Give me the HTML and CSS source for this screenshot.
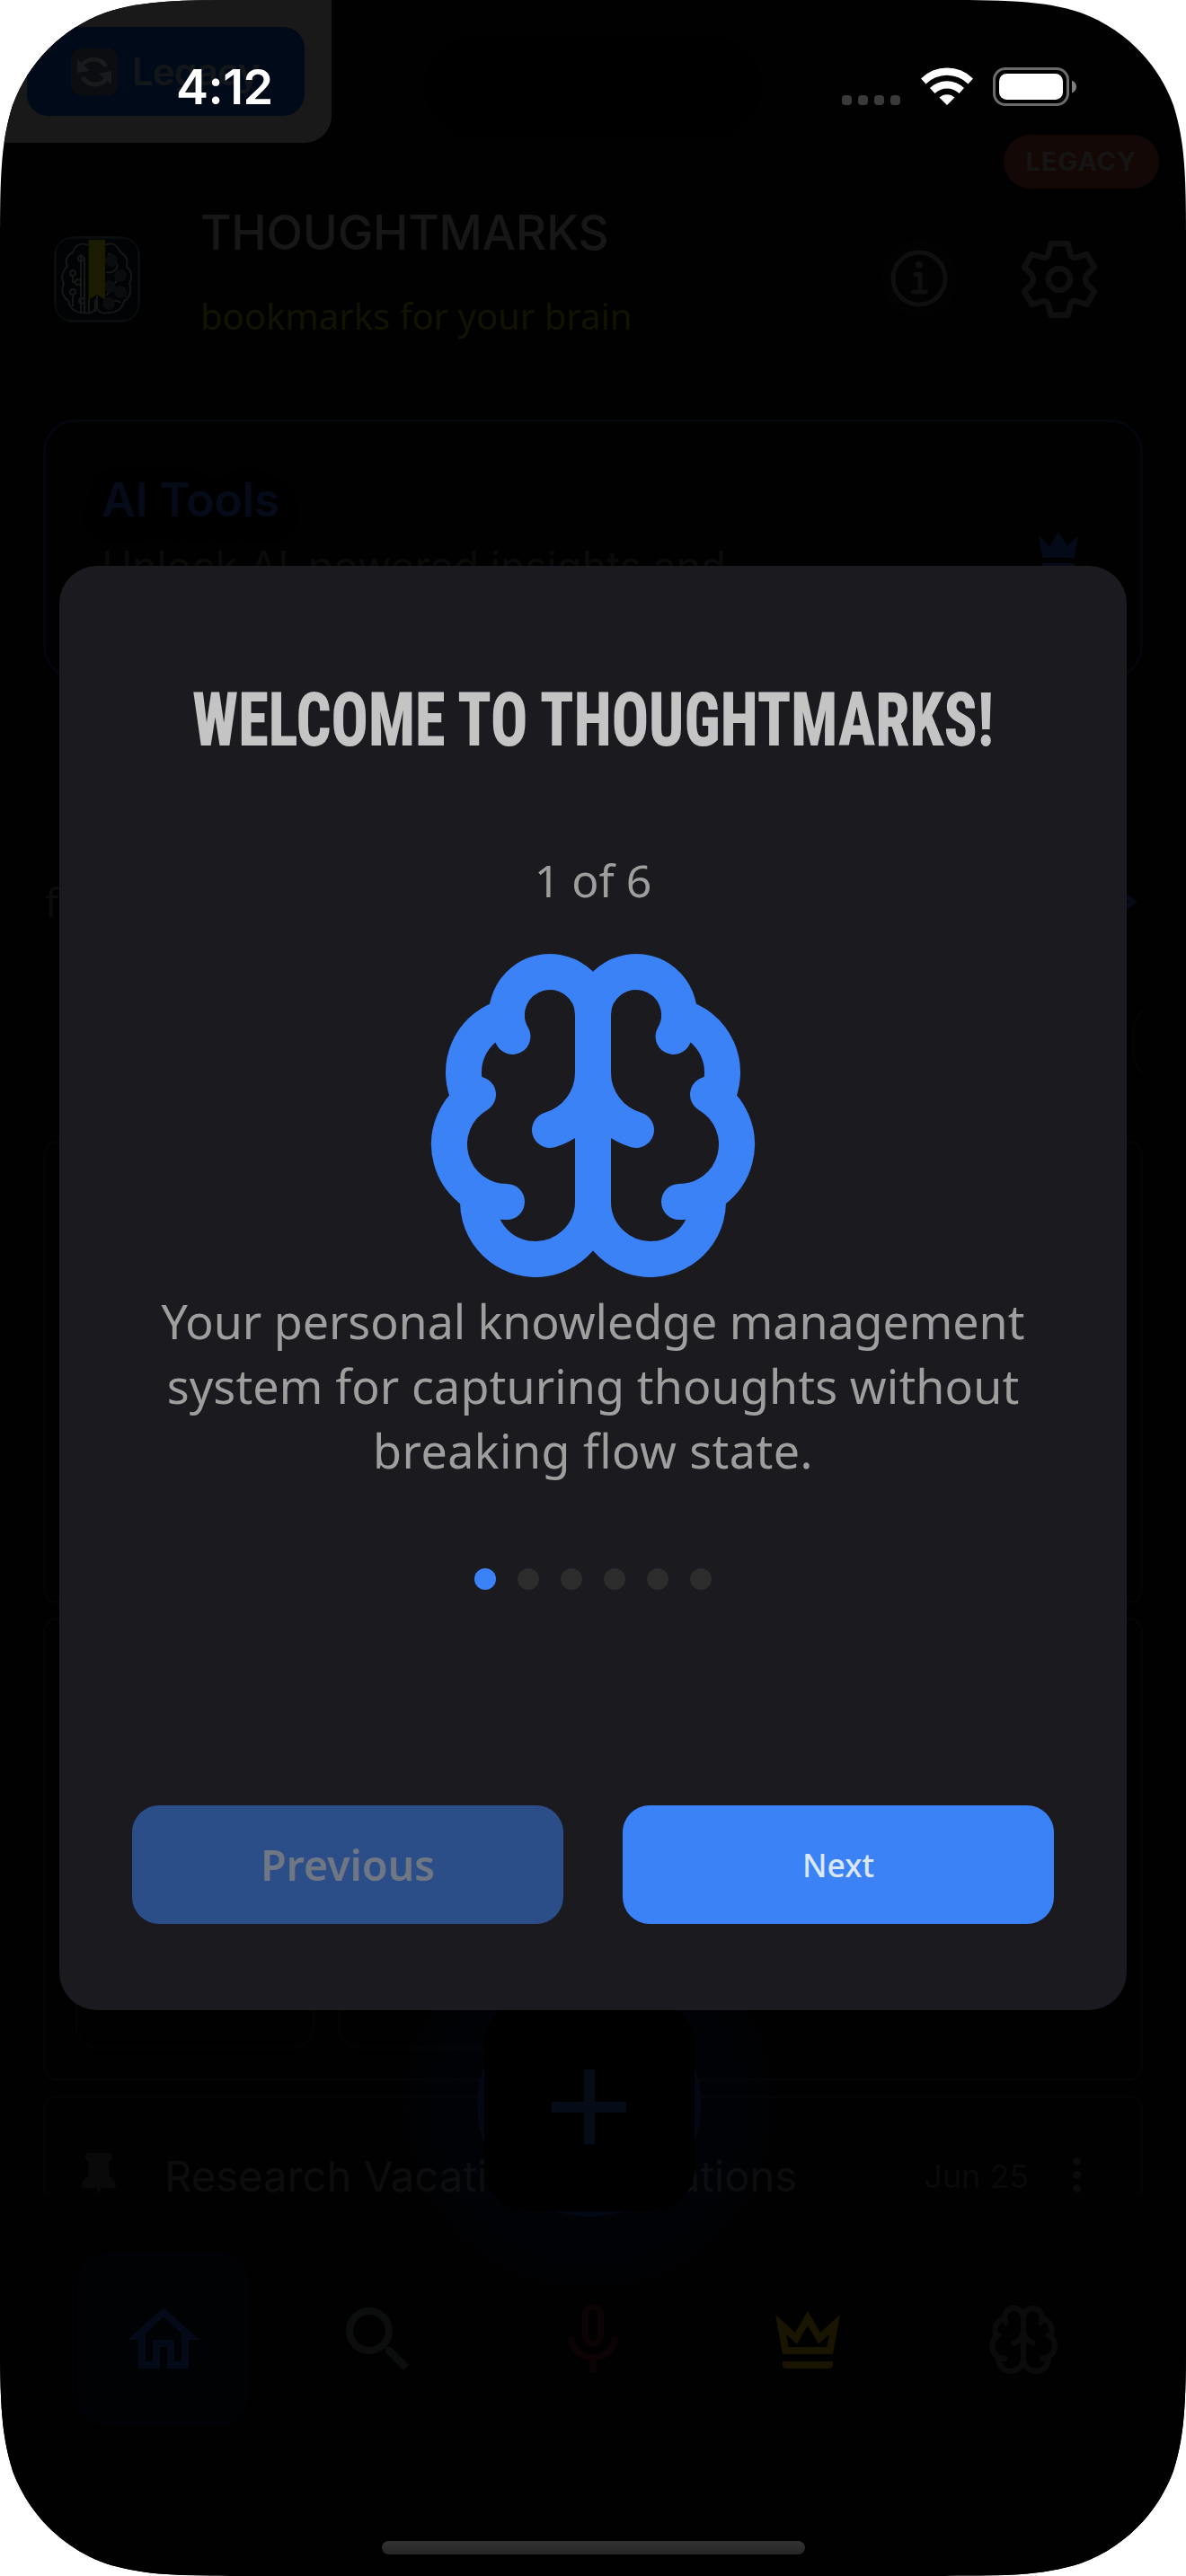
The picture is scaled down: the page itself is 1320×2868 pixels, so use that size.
FILE: index.html
```html
<!DOCTYPE html>
<html lang="en">
<head>
<meta charset="utf-8">
<title>Thoughtmarks</title>
<link rel="stylesheet" href="styles.css">
</head>
<body>
<svg class="defs" aria-hidden="true">
  <symbol id="brain" viewBox="0 0 24 24">
    <g fill="none" stroke="currentColor" stroke-linecap="round" stroke-linejoin="round">
      <path d="M12 18V5"/>
      <path d="M15 13a4.17 4.17 0 0 1-3-4 4.17 4.17 0 0 1-3 4"/>
      <path d="M17.598 6.5A3 3 0 1 0 12 5a3 3 0 1 0-5.598 1.5"/>
      <path d="M17.997 5.125a4 4 0 0 1 2.526 5.77"/>
      <path d="M18 18a4 4 0 0 0 2-7.464"/>
      <path d="M19.967 17.483A4 4 0 1 1 12 18a4 4 0 1 1-7.967-.517"/>
      <path d="M6 18a4 4 0 0 1-2-7.464"/>
      <path d="M6.003 5.125a4 4 0 0 0-2.526 5.77"/>
    </g>
  </symbol>
</svg>
<div class="phone">
  <div class="screen">
    <header class="header">
      <svg class="logo" viewBox="0 0 96 96">
        <rect width="96" height="96" rx="22" fill="#0a0d0d"/>
        <rect x="3" y="3" width="90" height="90" rx="16" fill="#010304"/>
        <g fill="none" stroke="#161818" stroke-width="2">
          <path d="M38 10c-8-4-15 1-17 8-7 3-9 10-6 16-7 6-7 14-4 19-4 8 0 16 5 19 2 9 9 14 18 13 6 2 12-1 12-6"/>
          <path d="M57 10c8-5 14 1 17 8 7 3 9 10 7 16 7 6 6 14 3 19 3 8 0 16-6 19-2 9-9 14-18 13-6 2-12-1-12-6V66"/>
          <path d="M30 86V28M34 86V24M39 86V70M21 78V65M21 44v7h4M30 20v20M46 84V70"/>
          <circle cx="30" cy="25" r="3"/><circle cx="21" cy="41" r="3"/><circle cx="27" cy="51" r="3"/><circle cx="21" cy="62" r="3"/><circle cx="31" cy="72" r="3"/>
          <path d="M60 20c8 0 12 8 4 14M58 40c8 2 14-4 12-10M60 54c10 2 10-10 20-8M58 66c6-8 18-8 22 2M60 78c2-6 10-8 14-4"/>
        </g>
        <g fill="#0b0c0d"><circle cx="64" cy="27" r="7"/><circle cx="74" cy="44" r="7"/><circle cx="62" cy="56" r="7"/><circle cx="74" cy="62" r="7"/><circle cx="61" cy="75" r="7"/></g>
        <path d="M38.500 4H57V71l-9-6-9.500 6Z" fill="#1a1b00"/>
      </svg>
      <div class="brand">
        <h1 class="brand-name">THOUGHTMARKS</h1>
        <p class="brand-tag">bookmarks for your brain</p>
      </div>
      <svg class="info" viewBox="-44 -44 88 88">
        <circle r="43" fill="#020202"/>
        <g fill="none" stroke="#0f0f0f" stroke-width="5" stroke-linecap="round" stroke-linejoin="round"><circle r="29"/><path d="M-4 -4.500H1V15M-6.500 15H7.500"/></g>
        <circle cy="-15" r="4" fill="#0f0f0f"/>
      </svg>
      <svg class="gear" viewBox="-48 -48 96 96" fill="none" stroke="#0f0f0f" stroke-width="6.500" stroke-linejoin="round">
        <path d="M-9.500-39.800H9.500L12.500-27Q14-24 18-24L30.500-28 39-13.500 30.500-5Q29-2 29 0T30.500 5L39 13.500 30.500 28 18 24Q14 24 12.500 27L9.500 39.800H-9.500L-12.500 27Q-14 24-18 24L-30.500 28-39 13.500-30.500 5Q-29 2-29 0T-30.500-5L-39-13.500-30.500-28-18-24Q-14-24-12.500-27Z"/>
        <circle r="12"/>
      </svg>
    </header>

    <section class="ai-card">
      <div class="ai-text">
        <h2 class="ai-title">AI Tools</h2>
        <p class="ai-sub">Unlock AI-powered insights and</p>
      </div>
      <svg class="ai-crown" viewBox="0 0 44 52"><path d="M0 4 12 16 22 0 32 16 44 4 40 29H4ZM4 35H40V42H4Z" fill="#040a17"/></svg>
    </section>

    <div class="filter-row">
      <span class="filter-label">f</span>
      <svg class="filter-arrow" viewBox="0 0 26 26"><path d="M8 0 26 13 8 26V16L18 13 8 10Z" fill="#040a17"/></svg>
    </div>
    <div class="chip-row"><div class="chip"></div></div>
    <div class="card card-a"></div>
    <div class="card card-b"><div class="tile"></div><div class="tile"></div></div>
    <div class="card card-c">
      <svg class="pin" viewBox="0 0 40 46" fill="#090909"><path d="M6 0H34Q36 4 33 9H31L32 26Q39 29 39 39H1Q1 29 8 26L9 9H7Q3 5 6 0ZM17 39H23L20 46Z"/></svg>
      <span class="note-title">Research Vacation Destinations</span>
      <span class="note-date">Jun 25</span>
      <span class="note-more"><i></i><i></i><i></i></span>
    </div>

    <nav class="tabs">
      <div class="tab tab-active"><svg viewBox="0 0 24 24"><path fill="#040a17" d="M12 5.690 17 10.190V18H15V12H9V18H7V10.190L12 5.690M12 3 2 12H5V20H11V14H13V20H19V12H22"/></svg></div>
      <div class="tab"><svg viewBox="0 0 24 24"><path fill="#0c0d0d" d="M15.500 14h-.79l-.28-.27A6.471 6.471 0 0 0 16 9.500 6.500 6.500 0 1 0 9.500 16c1.610 0 3.090-.59 4.230-1.570l.27.28v.79l5 4.990L20.490 19l-4.990-5zm-6 0C7.010 14 5 11.990 5 9.500S7.010 5 9.500 5 14 7.010 14 9.500 11.990 14 9.500 14z"/></svg></div>
      <div class="tab"><svg viewBox="0 0 24 24" fill="none" stroke="#0b0304" stroke-width="1.800"><rect x="9.900" y="2.900" width="4.200" height="10.200" rx="2.100"/><path d="M5.900 11.200a6.100 5.800 0 0 0 12.200 0M12 17V21.200" stroke-width="1.900"/></svg></div>
      <div class="tab"><svg viewBox="0 0 24 24"><path fill="#1a1500" d="M12 8 15 13.200 18 10.500 17.300 14H6.700L6 10.500 9 13.200 12 8M12 4 8.500 10 3 5 5 16H19L21 5 15.500 10 12 4M19 18H5V19C5 19.600 5.400 20 6 20H18C18.600 20 19 19.600 19 19V18Z"/></svg></div>
      <div class="tab"><svg class="tab-brain"><use href="#brain"/></svg></div>
    </nav>
    <div class="fab">
      <div class="fab-glow"></div>
      <div class="fab-ring"></div>
      <div class="fab-body"><svg viewBox="0 0 84 84"><path d="M42 0V83M0 42H83" stroke="#050b17" stroke-width="12"/></svg></div>
    </div>
  </div>

  <div class="island"></div>
  <div class="toggle">
    <div class="toggle-button">
      <svg viewBox="0 0 52 52"><rect width="52" height="52" rx="10" fill="#0b0d10"/><g fill="none" stroke="#191b1d" stroke-width="5"><path d="M11 23C13 11 31 7 39 20"/><path d="M41 29C39 41 21 45 13 32"/></g><path d="M7 12V27L21 25ZM45 40V25L31 28Z" fill="#191b1d"/></svg>
      <span>Legacy</span>
    </div>
  </div>
  <div class="legacy-badge">LEGACY</div>

  <div class="dialog">
    <h2 class="dialog-title"><svg width="892" height="100"><text x="0" y="79.500" textLength="892" lengthAdjust="spacingAndGlyphs">WELCOME TO THOUGHTMARKS!</text></svg></h2>
    <p class="step">1 of 6</p>
    <svg class="dialog-brain"><use href="#brain"/></svg>
    <p class="desc"><span class="l1">Your personal knowledge management</span><span class="l2">system for capturing thoughts without</span><span class="l3">breaking flow state.</span></p>
    <div class="dots"><i class="on"></i><i></i><i></i><i></i><i></i><i></i></div>
    <div class="actions">
      <button class="btn btn-prev">Previous</button>
      <button class="btn btn-next">Next</button>
    </div>
  </div>

  <div class="status">
    <span class="time">4:12</span>
    <div class="signal"><i></i><i></i><i></i><i></i></div>
    <svg class="wifi" viewBox="0 0 58 42" fill="#fff"><path d="M0 12.500A41 41 0 0 1 58 12.500L52.500 18.500A33.500 33.500 0 0 0 5.500 18.500ZM10 23A27 27 0 0 1 48 23L42.500 29A19.500 19.500 0 0 0 15.500 29ZM20.500 33.500A12.500 12.500 0 0 1 37.500 33.500L29 42Z"/></svg>
    <svg class="battery" viewBox="0 0 94 43"><rect x="1.500" y="1.500" width="82" height="40" rx="12.500" fill="none" stroke="#6b6b6b" stroke-width="3"/><rect x="7" y="7" width="71" height="29" rx="8.500" fill="#fff"/><path d="M88 14.500Q93 17 93 21.500T88 28.500Z" fill="#808080"/></svg>
  </div>
  <div class="home-bar"></div>
</div>
</body>
</html>
```
FILE: styles.css
```css
* { box-sizing: border-box; }
body { margin: 0; background: #fff; font-family: Inter, "Liberation Sans", sans-serif; }
h1, h2, p { margin: 0; font-weight: 400; }
svg { display: block; flex: none; }
.defs { position: absolute; width: 0; height: 0; }

.phone {
  position: relative;
  width: 1320px;
  height: 2868px;
  overflow: hidden;
  background: #010101;
  clip-path: path("M284.300 0H1035.700C1117.500 0 1158.500 0 1202.500 13.900C1250.700 31.400 1288.600 69.300 1306.100 117.500C1320 161.500 1320 202.500 1320 284.300V2583.700C1320 2665.500 1320 2706.500 1306.100 2750.500C1288.600 2798.700 1250.700 2836.600 1202.500 2854.100C1158.500 2868 1117.500 2868 1035.700 2868H284.300C202.500 2868 161.500 2868 117.500 2854.100C69.300 2836.600 31.400 2798.700 13.900 2750.500C0 2706.500 0 2665.500 0 2583.700V284.300C0 202.500 0 161.500 13.900 117.500C31.400 69.300 69.300 31.400 117.500 13.900C161.500 0 202.500 0 284.300 0Z");
}

/* Home screen under the overlay */
.screen { position: relative; height: 100%; padding: 215px 48px 0; display: flex; flex-direction: column; }
.header { height: 252px; flex: none; display: flex; align-items: flex-start; padding-left: 12px; }
.logo { width: 96px; height: 96px; margin: 48px 67px 0 0; }
.brand { width: 756px; }
.brand-name { margin-top: 12px; font-size: 53px; line-height: 64px; font-weight: 500; letter-spacing: -0.300px; color: #171717; white-space: nowrap; }
.brand-tag { margin-top: 33px; font-family: "Noto Sans", sans-serif; font-size: 40px; line-height: 56px; color: #121300; white-space: nowrap; }
.info { width: 88px; height: 88px; margin-top: 51px; }
.gear { width: 96px; height: 96px; margin: 48px 0 0 64px; }

.ai-card { height: 289px; flex: none; display: flex; justify-content: space-between; padding: 0 69px 0 62px; border: 3px solid #04060d; border-radius: 36px; }
.ai-title { margin-top: 55px; font-size: 52px; line-height: 64px; font-weight: 600; letter-spacing: -0.400px; color: #050b18; text-shadow: 0 6px 20px #010302; }
.ai-sub { margin-top: 13px; font-size: 46px; line-height: 56px; color: #0a0b0b; white-space: nowrap; }
.ai-crown { width: 44px; height: 52px; margin-top: 122px; }

.filter-row { height: 50px; margin-top: 223px; flex: none; display: flex; justify-content: space-between; align-items: center; padding: 0 6px 0 2px; }
.filter-label { font-family: "Noto Sans", sans-serif; font-size: 44px; line-height: 50px; color: #0c0c0c; }
.filter-arrow { width: 26px; height: 26px; }
.chip-row { height: 84px; margin-top: 89px; flex: none; display: flex; justify-content: flex-end; overflow: hidden; }
.chip { width: 200px; flex: none; margin-right: -188px; border: 3px solid #040404; border-radius: 30px; }
.card { flex: none; border: 3px solid #040404; border-radius: 15px; }
.card-a { height: 516px; margin-top: 68px; }
.card-b { height: 516px; margin-top: 15px; padding: 33px; display: flex; gap: 26px; }
.tile { width: 266px; border: 2px solid #040404; border-radius: 24px; }
.card-c { height: 108px; margin-top: 16px; display: flex; align-items: flex-start; border-bottom: 0; border-bottom-left-radius: 0; border-bottom-right-radius: 0; padding: 61px 66px 0 39px; }
.pin { width: 40px; height: 46px; }
.note-title { margin-left: 53px; margin-top: -2px; width: 846px; font-size: 47.200px; line-height: 56px; color: #0d0d0d; white-space: nowrap; height: 44px; }
.note-date { margin-top: 5px; width: 166px; font-size: 36px; line-height: 42px; color: #0a0a0a; white-space: nowrap; }
.note-more { display: flex; flex-direction: column; gap: 6px; margin-top: 5px; }
.note-more i { width: 9px; height: 9px; border-radius: 50%; background: #0b0b0b; }

.tabs { height: 426px; flex: none; margin: 0 -48px; padding: 66px 87px 0; border-top: 3px solid #020202; background: #010101; display: flex; justify-content: space-between; }
.tab { width: 189px; height: 190px; display: flex; align-items: center; justify-content: center; }
.tab svg { width: 96px; height: 96px; }
.tab .tab-brain { width: 84px; height: 84px; color: #0b0b0b; stroke-width: 1.800; }
.tab-active { background: #010203; border: 2px solid #020308; border-radius: 30px; }

.fab { position: absolute; left: 451px; top: 2139px; width: 410px; height: 410px; }
.fab-glow { position: absolute; inset: 0; border-radius: 50%; background: radial-gradient(circle closest-side, rgba(10, 40, 120, 0.035) 85%, rgba(10, 40, 120, 0.015)); }
.fab-ring { position: absolute; left: 80px; top: 80px; width: 249px; height: 249px; border-radius: 50%; background: #030814; }
.fab-body { position: absolute; left: 88px; top: 89px; width: 234px; height: 234px; border-radius: 48px; background: #000; }
.fab-body svg { width: 84px; height: 84px; margin: 76px 0 0 75px; }

/* System and debug overlays */
.island { position: absolute; left: 472px; top: 41px; width: 376px; height: 112px; border-radius: 56px; background: #000; }
.toggle { position: absolute; left: 0; top: 0; width: 369px; height: 159px; padding: 30px; background: #191919; border-bottom-right-radius: 30px; }
.toggle-button { height: 99px; padding-left: 49px; display: flex; align-items: center; gap: 16px; border-radius: 24px; background: #000a18; color: #141719; font-size: 42px; font-weight: 600; }
.toggle-button svg { width: 52px; height: 52px; }
.toggle-button span { letter-spacing: -1px; }
.legacy-badge { position: absolute; left: 1117px; top: 150px; width: 173px; height: 60px; border-radius: 30px; background: #130805; color: #151515; font-size: 29px; line-height: 60px; font-weight: 700; text-align: center; letter-spacing: 1px; }
.status { position: absolute; left: 196px; top: 75px; width: 1004px; height: 43px; display: flex; align-items: flex-start; color: #fff; }
.time { width: 741px; font-size: 54px; line-height: 44px; font-weight: 600; letter-spacing: -0.500px; }
.signal { display: flex; gap: 7px; margin-top: 31px; width: 88px; }
.signal i { width: 11px; height: 11px; border-radius: 4px; background: #3a3a3a; }
.wifi { width: 58px; height: 42px; }
.battery { width: 94px; height: 43px; margin-left: 22px; }
.home-bar { position: absolute; left: 425px; top: 2829px; width: 471px; height: 15px; border-radius: 8px; background: linear-gradient(#333, #262626); }

/* Welcome dialog */
.dialog { position: absolute; left: 66px; top: 630px; width: 1188px; height: 1608px; padding: 120px 81px 0; border-radius: 42px; background: #1b1a1e; display: flex; flex-direction: column; align-items: center; }
.dialog-title { height: 100px; }
.dialog-title text { font-family: Roboto, "Liberation Sans", sans-serif; font-stretch: 75%; font-size: 82.500px; font-weight: 800; fill: #c4c4c4; }
.step { margin-top: 94px; height: 70px; font-family: "Noto Sans", sans-serif; font-size: 50px; line-height: 72px; color: #9e9e9e; }
.dialog-brain { margin-top: 36px; width: 384px; height: 384px; color: #3b82f6; stroke-width: 2.500; }
.desc { margin-top: 1px; display: flex; flex-direction: column; align-items: center; font-family: "Noto Sans", sans-serif; font-size: 52px; line-height: 72px; color: #9e9e9e; white-space: nowrap; }
.l1 { letter-spacing: -0.060px; }
.l2 { letter-spacing: 0.130px; }
.l3 { letter-spacing: 0.450px; }
.dots { display: flex; gap: 24px; margin-top: 95px; }
.dots i { width: 24px; height: 24px; border-radius: 50%; background: #2d2d2d; }
.dots .on { background: #3b82f6; }
.actions { align-self: stretch; display: flex; gap: 66px; margin-top: 240px; }
.btn { flex: 1; height: 132px; border: 0; padding: 0; border-radius: 30px; font-family: "Noto Sans", sans-serif; font-weight: 500; }
.btn-prev { background: #2b4d88; color: #6f7684; font-size: 46.500px; font-weight: 600; }
.btn-next { background: #3b82f6; color: #dbe7fc; font-size: 35.500px; }
```
